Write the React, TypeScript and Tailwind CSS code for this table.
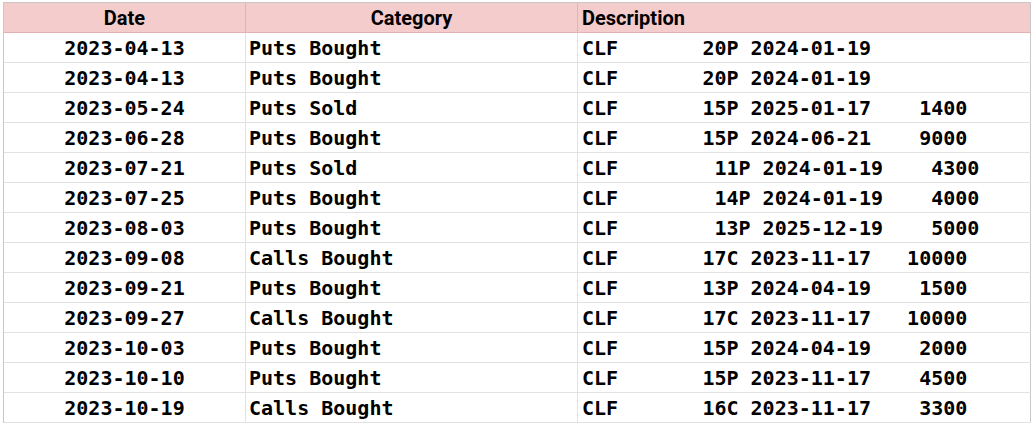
const rows: [string, string, string][] = [
  ['2023-04-13', 'Puts Bought', 'CLF       20P 2024-01-19'],
  ['2023-04-13', 'Puts Bought', 'CLF       20P 2024-01-19'],
  ['2023-05-24', 'Puts Sold', 'CLF       15P 2025-01-17    1400'],
  ['2023-06-28', 'Puts Bought', 'CLF       15P 2024-06-21    9000'],
  ['2023-07-21', 'Puts Sold', 'CLF        11P 2024-01-19    4300'],
  ['2023-07-25', 'Puts Bought', 'CLF        14P 2024-01-19    4000'],
  ['2023-08-03', 'Puts Bought', 'CLF        13P 2025-12-19    5000'],
  ['2023-09-08', 'Calls Bought', 'CLF       17C 2023-11-17   10000'],
  ['2023-09-21', 'Puts Bought', 'CLF       13P 2024-04-19    1500'],
  ['2023-09-27', 'Calls Bought', 'CLF       17C 2023-11-17   10000'],
  ['2023-10-03', 'Puts Bought', 'CLF       15P 2024-04-19    2000'],
  ['2023-10-10', 'Puts Bought', 'CLF       15P 2023-11-17    4500'],
  ['2023-10-19', 'Calls Bought', 'CLF       16C 2023-11-17    3300'],
]

const mono = "font-['DejaVu_Sans_Mono',monospace] font-bold text-[20px] text-black whitespace-pre"
const head = "font-['Roboto',sans-serif] font-bold text-[20px] text-black"

export default function App() {
  return (
    <div className="w-[1031px] h-[425px] bg-white overflow-hidden pt-[2px] pl-[3px]">
      <div className="w-[1028px] border-t border-l border-[#c8c8c8]">
        <div className="flex h-[30px] bg-[#f4cccc] border-b border-[#e3b1b1]">
          <div className={`w-[242px] border-r border-[#dcb6b6] flex items-center justify-center ${head}`}>Date</div>
          <div className={`w-[332px] border-r border-[#dcb6b6] flex items-center justify-center ${head}`}>Category</div>
          <div className={`w-[453px] border-r border-[#c8c8c8] flex items-center pl-[4px] ${head}`}>Description</div>
        </div>
        {rows.map((r, i) => (
          <div key={i} className="flex h-[30px] border-b border-[#e2e2e2]">
            <div className={`w-[242px] border-r border-[#e2e2e2] flex items-center justify-center ${mono}`}>{r[0]}</div>
            <div className={`w-[332px] border-r border-[#e2e2e2] flex items-center pl-[3px] ${mono}`}>{r[1]}</div>
            <div className={`w-[453px] border-r border-[#c8c8c8] flex items-center pl-[4px] ${mono}`}>{r[2]}</div>
          </div>
        ))}
      </div>
    </div>
  )
}
